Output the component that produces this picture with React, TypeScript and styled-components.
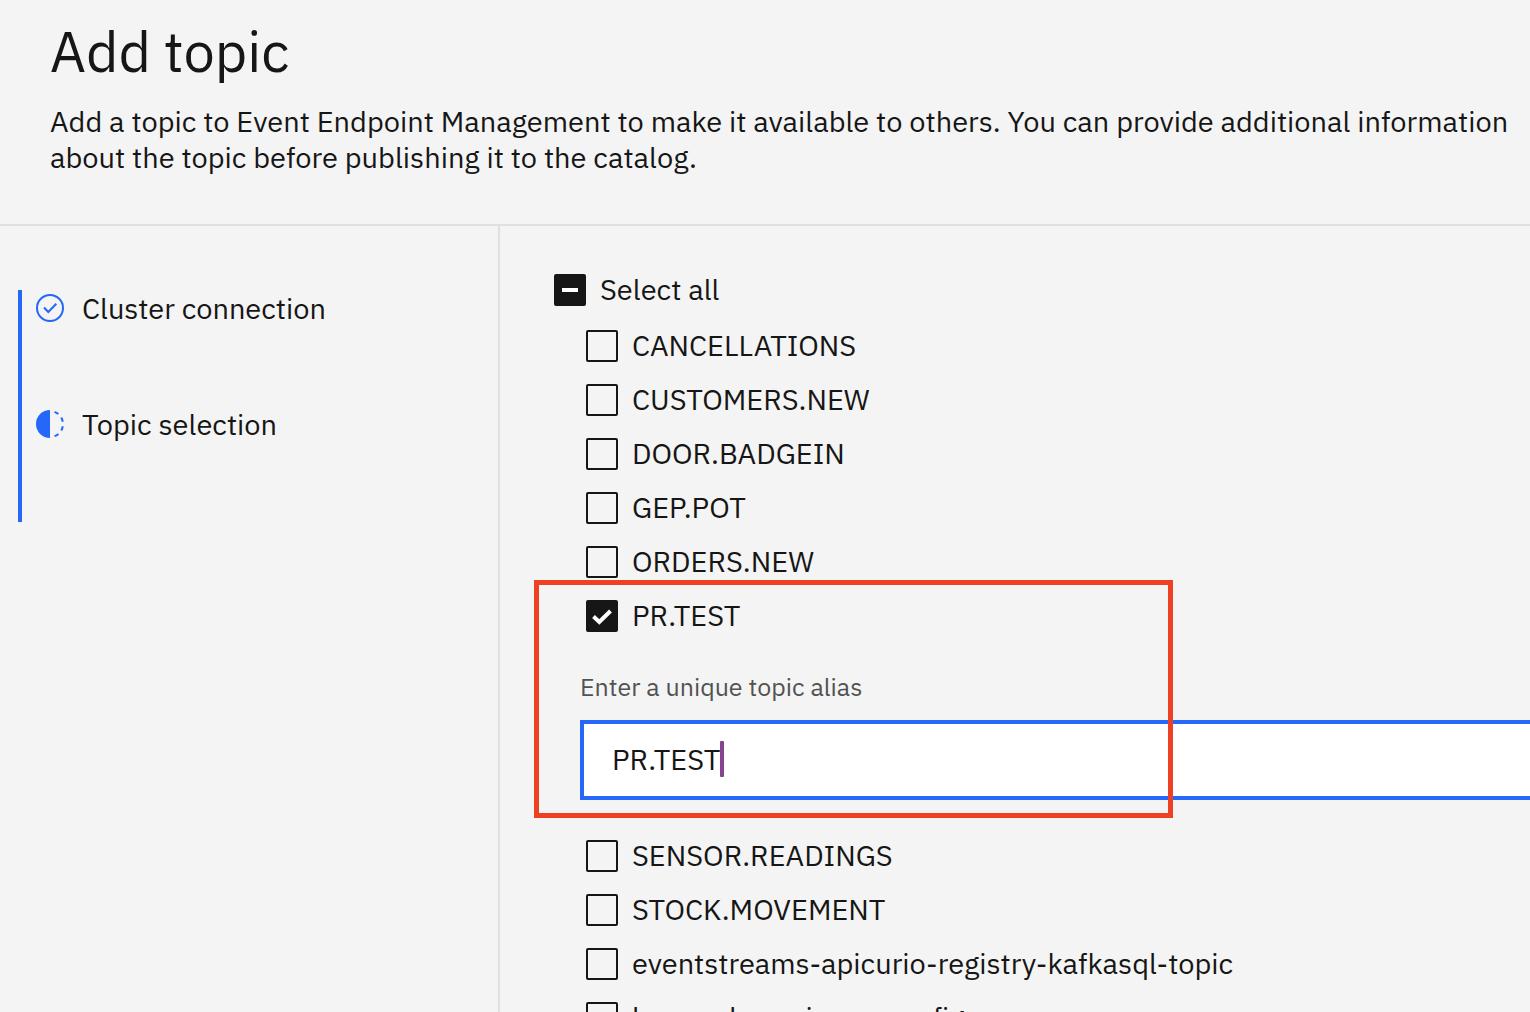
import React from "react";
import styled, { createGlobalStyle } from "styled-components";

const color = {
  background: "#f4f4f4",
  field: "#ffffff",
  text: "#161616",
  textSoft: "#525252",
  border: "#e0e0e0",
  focus: "#2567f8",
  caret: "#874391",
  highlight: "#ee4023",
};

const GlobalStyle = createGlobalStyle`
  *, *::before, *::after {
    box-sizing: border-box;
  }
  body {
    margin: 0;
    background: ${color.background};
    color: ${color.text};
    font-family: "IBM Plex Sans", "Noto Sans", sans-serif;
    font-size: 29px;
  }
`;

const Page = styled.div`
  display: flex;
  flex-direction: column;
  height: 100vh;
  overflow: hidden;
`;

const Header = styled.header`
  flex: none;
  padding: 15px 16px 49px 50px;
  border-bottom: 2px solid ${color.border};
`;

const Title = styled.h1`
  margin: 0 0 16px;
  font-size: 56px;
  font-weight: 400;
  line-height: 72px;
`;

const Description = styled.p`
  margin: 0;
  line-height: 36px;
`;

const Body = styled.div`
  flex: 1;
  min-height: 0;
  display: grid;
  grid-template-columns: 500px minmax(0, 1fr);
`;

const Sidebar = styled.nav`
  padding: 64px 18px;
  border-right: 2px solid ${color.border};
`;

const Steps = styled.ol`
  margin: 0;
  padding: 0;
  list-style: none;
  border-left: 4px solid ${color.focus};
`;

const Step = styled.li`
  display: flex;
  align-items: flex-start;
  height: 116px;
  padding: 2px 0 0 14px;
`;

const StepButton = styled.button`
  display: flex;
  align-items: center;
  gap: 18px;
  padding: 0;
  border: 0;
  background: none;
  color: inherit;
  font: inherit;
  line-height: 32px;
  cursor: pointer;
`;

const StepIcon = styled.svg`
  flex: none;
  width: 28px;
  height: 28px;
`;

const Content = styled.main`
  min-height: 0;
  overflow: hidden;
  padding: 48px 0 0 54px;
`;

const TopicList = styled.ul`
  display: flex;
  flex-direction: column;
  gap: 22px;
  margin: 24px 0 0 26px;
  padding: 0;
  list-style: none;
`;

const TopicItem = styled.li`
  position: relative;
`;

const CheckRow = styled.label<{ $nested?: boolean }>`
  display: flex;
  align-items: flex-start;
  gap: 14px;
  padding-left: ${(p) => (p.$nested ? "6px" : "0")};
  line-height: 30px;
  white-space: nowrap;
  cursor: pointer;
`;

const BoxStack = styled.span`
  display: grid;
  flex: none;
  width: 32px;
  height: 32px;

  > * {
    grid-area: 1 / 1;
  }
`;

const CheckInput = styled.input`
  appearance: none;
  width: 32px;
  height: 32px;
  margin: 0;
  border: 2px solid ${color.text};
  border-radius: 2px;

  &:checked,
  &:indeterminate {
    background: ${color.text};
  }
`;

const BoxMark = styled.svg`
  width: 32px;
  height: 32px;
  pointer-events: none;
`;

const Alias = styled.div`
  display: flex;
  flex-direction: column;
  gap: 18px;
  padding: 40px 0 18px;
`;

const AliasLabel = styled.label`
  color: ${color.textSoft};
  font-size: 25px;
  line-height: 30px;
`;

const AliasField = styled.div`
  display: flex;
  align-items: center;
  height: 80px;
  padding: 0 0 2px 28px;
  border: 4px solid ${color.focus};
  border-right: 0;
  background: ${color.field};
`;

const AliasInput = styled.input`
  field-sizing: content;
  height: 36px;
  padding: 0;
  border: 0;
  outline: 0;
  background: none;
  color: inherit;
  font: inherit;
  line-height: 36px;
`;

const Caret = styled.span`
  width: 4px;
  height: 36px;
  border-radius: 1px;
  background: ${color.caret};
`;

const Highlight = styled.div`
  position: absolute;
  top: -20px;
  left: -46px;
  width: 639px;
  height: 238px;
  border: 5px solid ${color.highlight};
  pointer-events: none;
`;

type BoxState = "empty" | "checked" | "mixed";

function Checkbox({ name, state, nested, onToggle }: {
  name: string;
  state: BoxState;
  nested?: boolean;
  onToggle: () => void;
}) {
  return (
    <CheckRow $nested={nested}>
      <BoxStack>
        <CheckInput
          type="checkbox"
          checked={state === "checked"}
          ref={(el) => {
            if (el) el.indeterminate = state === "mixed";
          }}
          onChange={onToggle}
        />
        {state === "checked" && (
          <BoxMark viewBox="0 0 32 32" aria-hidden="true">
            <path d="M7.5 16.5 13.3 22 24.5 11" fill="none" stroke="#fff" strokeWidth="4" />
          </BoxMark>
        )}
        {state === "mixed" && (
          <BoxMark viewBox="0 0 32 32" aria-hidden="true">
            <path d="M8 14h16v4H8z" fill="#fff" />
          </BoxMark>
        )}
      </BoxStack>
      {name}
    </CheckRow>
  );
}

function CompleteIcon() {
  return (
    <StepIcon viewBox="0 0 28 28" fill="none" stroke={color.focus} strokeWidth="2" aria-hidden="true">
      <circle cx="14" cy="14" r="13" />
      <path d="M8 13.5 12.3 18 20.3 9.7" />
    </StepIcon>
  );
}

function CurrentIcon() {
  return (
    <StepIcon viewBox="2 2 28 28" fill={color.focus} aria-hidden="true">
      <path d="M23.7642 6.8593l1.2851-1.5315A13.976 13.976 0 0020.8672 2.887l-.6836 1.8776A11.9729 11.9729 0 0123.7642 6.8593z" />
      <path d="M27.81 14l1.9677-.4128A13.8888 13.8888 0 0028.14 9.0457L26.4087 10A12.52 12.52 0 0127.81 14z" />
      <path d="M20.1836 27.2354l.6836 1.8776a13.976 13.976 0 004.1821-2.4408l-1.2851-1.5315A11.9729 11.9729 0 0120.1836 27.2354z" />
      <path d="M26.4087 22L28.14 23a14.14 14.14 0 001.6382-4.5872L27.81 18.0659A12.1519 12.1519 0 0126.4087 22z" />
      <path d="M16 30V2a14 14 0 000 28z" />
    </StepIcon>
  );
}

const topics = [
  "CANCELLATIONS",
  "CUSTOMERS.NEW",
  "DOOR.BADGEIN",
  "GEP.POT",
  "ORDERS.NEW",
  "PR.TEST",
  "SENSOR.READINGS",
  "STOCK.MOVEMENT",
  "eventstreams-apicurio-registry-kafkasql-topic",
  "heron-demo-icons-config",
];

export default function App() {
  const [selected, setSelected] = React.useState<string[]>(["PR.TEST"]);
  const [alias, setAlias] = React.useState("PR.TEST");

  const toggle = (topic: string) =>
    setSelected((list) =>
      list.includes(topic) ? list.filter((t) => t !== topic) : [...list, topic]
    );

  const all = selected.length === topics.length;
  const allState: BoxState = all ? "checked" : selected.length ? "mixed" : "empty";

  return (
    <Page>
      <GlobalStyle />
      <Header>
        <Title>Add topic</Title>
        <Description>
          Add a topic to Event Endpoint Management to make it available to others. You can provide
          additional information about the topic before publishing it to the catalog.
        </Description>
      </Header>
      <Body>
        <Sidebar>
          <Steps>
            <Step>
              <StepButton type="button">
                <CompleteIcon />
                Cluster connection
              </StepButton>
            </Step>
            <Step aria-current="step">
              <StepButton type="button">
                <CurrentIcon />
                Topic selection
              </StepButton>
            </Step>
          </Steps>
        </Sidebar>
        <Content>
          <Checkbox
            name="Select all"
            state={allState}
            onToggle={() => setSelected(all ? [] : topics)}
          />
          <TopicList>
            {topics.map((topic) => (
              <TopicItem key={topic}>
                <Checkbox
                  name={topic}
                  nested
                  state={selected.includes(topic) ? "checked" : "empty"}
                  onToggle={() => toggle(topic)}
                />
                {topic === "PR.TEST" && selected.includes(topic) && (
                  <>
                    <Alias>
                      <AliasLabel htmlFor="alias">Enter a unique topic alias</AliasLabel>
                      <AliasField>
                        <AliasInput
                          id="alias"
                          type="text"
                          value={alias}
                          onChange={(e) => setAlias(e.target.value)}
                        />
                        <Caret />
                      </AliasField>
                    </Alias>
                    <Highlight />
                  </>
                )}
              </TopicItem>
            ))}
          </TopicList>
        </Content>
      </Body>
    </Page>
  );
}
